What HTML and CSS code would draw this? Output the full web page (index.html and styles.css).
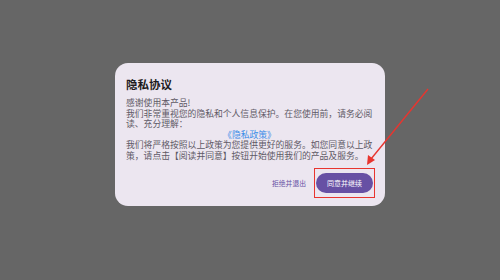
FILE: index.html
```html
<!DOCTYPE html>
<html>
<head>
    <meta charset="UTF-8">
    <title>隐私协议</title>
    <link rel="stylesheet" href="styles.css">
</head>
<body>
	<div class="page">
		<div class="dialog">
			<div class="title">隐私协议</div>
			<div class="content">
				<p>感谢使用本产品!<br>我们非常重视您的隐私和个人信息保护。在您使用前，请务必阅读、充分理解：</p>
				<p class="link">《隐私政策》</p>
				<p>我们将严格按照以上政策为您提供更好的服务。如您同意以上政策，请点击【阅读并同意】按钮开始使用我们的产品及服务。</p>
			</div>
			<div class="actions">
				<span class="btn-text">拒绝并退出</span>
				<span class="btn-fill">同意并继续</span>
			</div>
		</div>
		<div class="mark"></div>
		<svg class="arrow" width="500" height="280" viewBox="0 0 500 280">
			<line x1="428" y1="89" x2="371" y2="159" stroke="#e8352f" stroke-width="1.4"/>
			<polygon points="367,165 368,155 375,160" fill="#e8352f"/>
		</svg>
	</div>
</body>
</html>
```

FILE: styles.css
```css
*{
	padding: 0;
	margin: 0;
}
body{
	background: #666666;
	font-family: "Noto Sans CJK SC", "Noto Sans", sans-serif;
}
.page{
	width: 500px;
	height: 280px;
	padding-top: 63px;
	box-sizing: border-box;
	position: relative;
}
.dialog{
	width: 270px;
	margin: 0 auto;
	background: #ece6f0;
	border-radius: 13px;
	padding: 13px 12px 13px 11px;
	box-sizing: border-box;
}
.title{
	font-size: 11.5px;
	font-weight: bold;
	line-height: 16px;
	color: #1d1b20;
}
.content{
	margin-top: 6px;
	font-size: 8.8px;
	line-height: 10.5px;
	color: #5f5a66;
}
.content .link{
	text-align: center;
	color: #3d8ee8;
}
.actions{
	margin-top: 12px;
	display: flex;
	justify-content: flex-end;
	align-items: center;
	gap: 10px;
}
.btn-text{
	font-size: 6.8px;
	color: #6750a4;
}
.btn-fill{
	width: 57px;
	height: 20px;
	line-height: 20px;
	border-radius: 10px;
	background: #6750a4;
	color: #fff;
	font-size: 7px;
	text-align: center;
}
.mark{
	position: absolute;
	left: 314px;
	top: 168px;
	width: 59px;
	height: 28px;
	border: 1.5px solid #e8352f;
}
.arrow{
	position: absolute;
	left: 0;
	top: 0;
}
```
